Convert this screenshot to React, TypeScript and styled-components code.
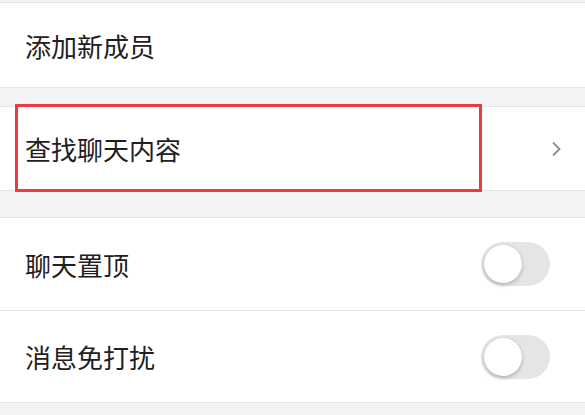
import React from "react";
import styled, { createGlobalStyle } from "styled-components";

const Global = createGlobalStyle`
  html, body { margin: 0; padding: 0; background: #f2f3f5; }
  body { font-family: "Noto Sans CJK SC", "Noto Sans", sans-serif; }
`;

const Page = styled.div`
  width: 585px;
  padding-top: 2px;
  display: flex;
  flex-direction: column;
`;

const Group = styled.div<{ $gap: number }>`
  margin-top: ${(p) => p.$gap}px;
  background: #fff;
  border-top: 1px solid #e4e5e7;
  border-bottom: 1px solid #e4e5e7;
  display: flex;
  flex-direction: column;
`;

const Row = styled.div<{ $h: number; $sep?: boolean }>`
  position: relative;
  height: ${(p) => p.$h}px;
  display: flex;
  align-items: center;
  justify-content: space-between;
  padding: 0 35px 0 25px;
  border-bottom: ${(p) => (p.$sep ? "1px solid #e4e5e7" : "none")};
`;

const Label = styled.span`
  font-size: 26px;
  color: #1f2022;
`;

const Highlight = styled.div`
  position: absolute;
  left: 15px;
  top: -3px;
  width: 461px;
  bottom: -2px;
  border: 3px solid #ee3a3e;
  pointer-events: none;
`;

const Chevron = styled.svg`
  width: 10px;
  height: 16px;
  margin-right: -11px;
`;

const Track = styled.div`
  width: 69px;
  height: 44px;
  border-radius: 22px;
  background: #e5e5e8;
  display: flex;
  align-items: center;
  padding-left: 3px;
  box-sizing: border-box;
`;

const Knob = styled.div`
  width: 38px;
  height: 38px;
  border-radius: 50%;
  background: #fff;
  box-shadow: 0 2px 4px rgba(0, 0, 0, 0.22), 0 0 1px rgba(0, 0, 0, 0.15);
`;

const Switch = () => (
  <Track>
    <Knob />
  </Track>
);

export default function App() {
  return (
    <>
      <Global />
      <Page>
        <Group $gap={0}>
          <Row $h={84}>
            <Label>添加新成员</Label>
          </Row>
        </Group>
        <Group $gap={18}>
          <Row $h={83}>
            <Label>查找聊天内容</Label>
            <Chevron viewBox="0 0 10 16">
              <path d="M2 1.5 L8.5 8 L2 14.5" fill="none" stroke="#8c8c8c" strokeWidth="1.8" />
            </Chevron>
            <Highlight />
          </Row>
        </Group>
        <Group $gap={26}>
          <Row $h={92} $sep>
            <Label>聊天置顶</Label>
            <Switch />
          </Row>
          <Row $h={91}>
            <Label>消息免打扰</Label>
            <Switch />
          </Row>
        </Group>
      </Page>
    </>
  );
}
